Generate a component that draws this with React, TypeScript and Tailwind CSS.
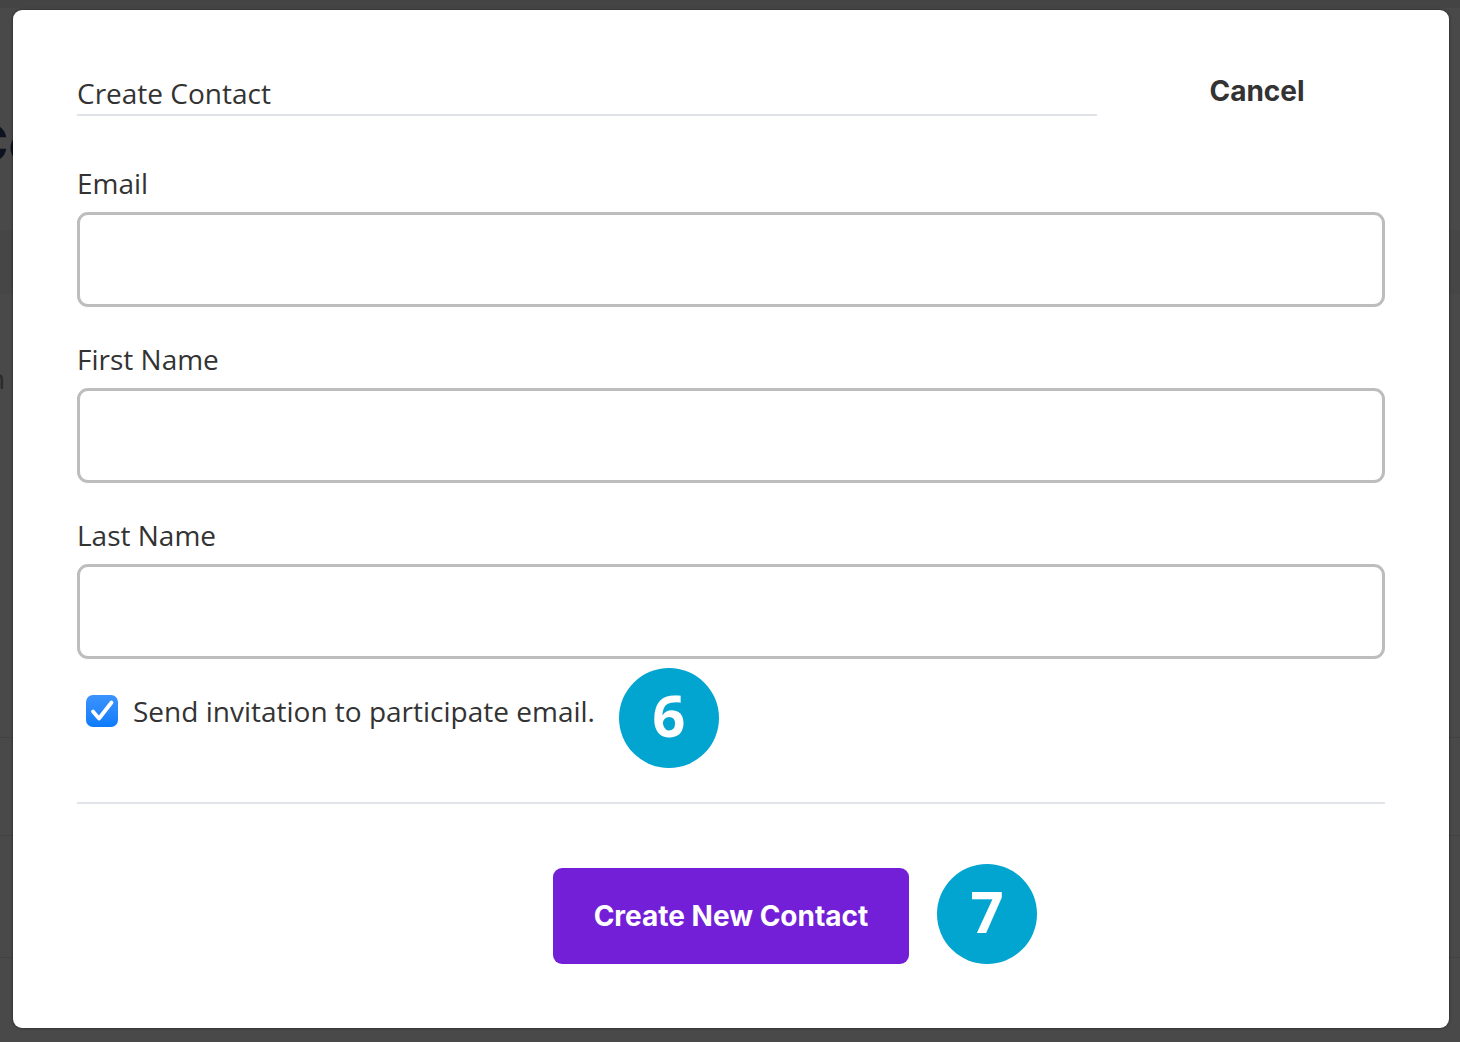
import React from "react";

const openSans = { fontFamily: '"Open Sans", "Noto Sans", sans-serif' };
const inter = { fontFamily: 'Inter, "Liberation Sans", sans-serif' };

function Field({ label }: { label: string }) {
  return (
    <div className="flex flex-col">
      <label className="text-[28px] leading-[42px] text-[#333333]" style={openSans}>
        {label}
      </label>
      <input
        type="text"
        className="mt-[8px] h-[95px] w-full rounded-[11px] border-[3px] border-[#bdbdbd] bg-white px-4 text-[28px] outline-none"
        style={openSans}
      />
    </div>
  );
}

function Badge({ n }: { n: string }) {
  return (
    <div
      className="flex h-[100px] w-[100px] items-center justify-center rounded-full bg-[#02a4d0] pb-[6px] text-[58px] font-bold leading-none text-white"
      style={openSans}
    >
      {n}
    </div>
  );
}

export default function App() {
  return (
    <div className="relative h-[1042px] w-[1460px] overflow-hidden bg-[#494949]">
      {/* faint page behind the overlay */}
      <div className="absolute left-0 top-0 h-full w-full">
        <div className="h-[8px] bg-[#444444]" />
        <div className="mt-[110px] pl-0">
          <span className="-ml-[30px] text-[52px] font-bold leading-none text-[#0e1322]" style={inter}>
            Co
          </span>
        </div>
        <div className="mt-[60px] h-[64px] bg-[#464646]" />
        <div className="mt-[70px] text-[28px] leading-none text-[#2a2a2a]" style={openSans}>
          <span className="-ml-[12px]">n</span>
        </div>
        <div className="mt-[345px] h-px bg-[#424242]" />
        <div className="mt-[97px] h-px bg-[#424242]" />
        <div className="mt-[121px] h-px bg-[#424242]" />
      </div>

      {/* modal */}
      <div className="absolute left-[13px] top-[10px] flex h-[1018px] w-[1436px] flex-col rounded-[9px] bg-white px-[64px] pt-[62px] shadow-[0_0_3px_rgba(0,0,0,0.6)]">
        <div className="flex items-start">
          <div className="w-[1020px] border-b-2 border-[#dfe3e8]">
            <h2 className="text-[28px] leading-[42px] text-[#333333]" style={openSans}>
              Create Contact
            </h2>
          </div>
          <div className="flex-1 pl-[32px] text-center">
            <button
              className="text-[28px] font-bold leading-[38px] text-[#333333]"
              style={inter}
            >
              Cancel
            </button>
          </div>
        </div>

        <div className="mt-[46px] flex flex-col gap-[31px]">
          <Field label="Email" />
          <Field label="First Name" />
          <Field label="Last Name" />
        </div>

        <div className="mt-[31px] flex h-[42px] items-center">
          <div className="ml-[9px] flex h-[32px] w-[32px] items-center justify-center rounded-[7px] bg-gradient-to-b from-[#3b93fd] to-[#0a7bfa]">
            <svg width="32" height="32" viewBox="0 0 32 32" fill="none">
              <path d="M7 16.5 L13 23.5 L25.5 7.5" stroke="white" strokeWidth="3.8" strokeLinecap="round" strokeLinejoin="round" />
            </svg>
          </div>
          <span className="ml-[15px] text-[28px] leading-[42px] text-[#333333]" style={openSans}>
            Send invitation to participate email.
          </span>
          <div className="relative ml-[24px] h-[42px] w-[100px]">
            <div className="absolute left-0 top-[-22px]">
              <Badge n="6" />
            </div>
          </div>
        </div>

        <div className="mt-[70px] h-[2px] bg-[#e1e4e8]" />

        <div className="mt-[64px] flex justify-center">
          <div className="relative">
            <button
              className="h-[96px] w-[356px] rounded-[9px] bg-[#731fd8] text-[28px] font-bold text-white"
              style={inter}
            >
              Create New Contact
            </button>
            <div className="absolute left-[384px] top-[-4px]">
              <Badge n="7" />
            </div>
          </div>
        </div>
      </div>
    </div>
  );
}
